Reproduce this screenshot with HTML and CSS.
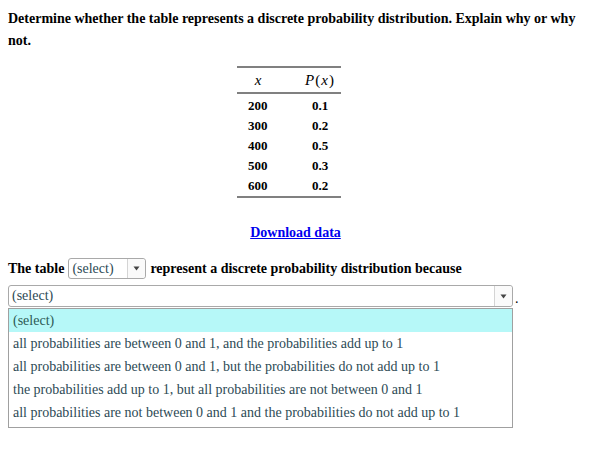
FILE: index.html
```html
<!DOCTYPE html>
<html>
<head>
<meta charset="utf-8">
<link rel="stylesheet" href="styles.css">
</head>
<body>
<p class="question">Determine whether the table represents a discrete probability distribution. Explain why or why not.</p>
<div class="table-wrap">
  <table class="dist">
    <thead>
      <tr><th class="c1"><i>x</i></th><th class="c2"><i>P</i>(<i>x</i>)</th></tr>
    </thead>
    <tbody>
      <tr><td class="c1">200</td><td class="c2">0.1</td></tr>
      <tr><td class="c1">300</td><td class="c2">0.2</td></tr>
      <tr><td class="c1">400</td><td class="c2">0.5</td></tr>
      <tr><td class="c1">500</td><td class="c2">0.3</td></tr>
      <tr><td class="c1">600</td><td class="c2">0.2</td></tr>
    </tbody>
  </table>
</div>
<div class="download"><a href="#">Download data</a></div>
<div class="sentence">
  <span>The table</span>
  <span class="sel sel-small"><span class="sel-text">(select)</span><span class="sel-arrow"><svg width="7" height="5" viewBox="0 0 7 5"><path d="M0.5 0.5 L6.5 0.5 L3.5 4.5 Z" fill="#444"/></svg></span></span>
  <span>represent a discrete probability distribution because</span>
</div>
<div class="row2">
  <div class="sel-wrap">
    <div class="sel-line">
      <span class="sel sel-wide"><span class="sel-text">(select)</span><span class="sel-arrow"><svg width="7" height="5" viewBox="0 0 7 5"><path d="M0.5 0.5 L6.5 0.5 L3.5 4.5 Z" fill="#444"/></svg></span></span>
      <span class="period">.</span>
    </div>
    <ul class="options">
      <li class="active">(select)</li>
      <li>all probabilities are between 0 and 1, and the probabilities add up to 1</li>
      <li>all probabilities are between 0 and 1, but the probabilities do not add up to 1</li>
      <li>the probabilities add up to 1, but all probabilities are not between 0 and 1</li>
      <li>all probabilities are not between 0 and 1 and the probabilities do not add up to 1</li>
    </ul>
  </div>
</div>
</body>
</html>
```
FILE: styles.css
```css
body {
  margin: 0;
  padding: 8px;
  font-family: "Liberation Serif", "Times New Roman", serif;
  font-size: 14px;
  color: #000;
  background: #fff;
}
.question {
  margin: 0;
  font-weight: bold;
  line-height: 22px;
}
.table-wrap {
  display: flex;
  justify-content: center;
  padding-right: 13px;
  margin-top: 14px;
}
.dist {
  border-collapse: collapse;
  width: 104px;
  font-family: "Liberation Serif", "Times New Roman", serif;
  font-size: 13px;
}
.dist th,
.dist td {
  font-family: "Liberation Serif", "Times New Roman", serif;
}
.dist thead tr {
  border-top: 2px solid #808080;
  border-bottom: 2px solid #808080;
}
.dist tbody tr:last-child {
  border-bottom: 2px solid #808080;
}
.dist tbody tr:first-child td {
  padding-top: 2px;
}
.dist th {
  font-weight: normal;
  font-size: 15px;
  height: 24px;
  padding: 0;
}
.dist th.c2 {
  letter-spacing: 1px;
}
.dist td {
  font-weight: bold;
  height: 20px;
  padding: 0;
}
.dist th.c1 { text-align: center; width: 42px; }
.dist td.c1 { text-align: left; padding-left: 11px; }
.dist .c2 { text-align: center; padding-left: 20px; }
.download {
  text-align: center;
  margin-top: 27px;
  line-height: 16px;
  font-weight: bold;
}
.download a {
  color: #0000ee;
  text-decoration: underline;
}
.sentence {
  display: flex;
  align-items: center;
  gap: 4px;
  margin-top: 17px;
  font-weight: bold;
}
.sel {
  display: inline-flex;
  align-items: stretch;
  box-sizing: border-box;
  border: 1px solid #a9a9a9;
  border-radius: 3px;
  background: #fff;
  font-weight: normal;
  color: #2d4a55;
}
.sel-small {
  width: 78px;
  height: 21px;
}
.sel-wide {
  width: 505px;
  height: 22px;
}
.sel-text {
  flex: 1;
  display: flex;
  align-items: center;
  padding-left: 3px;
}
.sel-arrow {
  width: 17px;
  border-left: 1px solid #d4d4d4;
  display: flex;
  align-items: center;
  justify-content: center;
  background: #fafafa;
  border-radius: 0 3px 3px 0;
}
.row2 {
  margin-top: 6px;
}
.sel-wrap {
  display: flex;
  flex-direction: column;
}
.sel-line {
  display: flex;
  align-items: flex-end;
}
.period {
  margin-left: 2px;
  line-height: 16px;
}
.options {
  width: 505px;
  box-sizing: border-box;
  margin: 1px 0 0 0;
  padding: 0 0 3px 0;
  list-style: none;
  border: 1px solid #a0a0a0;
  background: #fff;
  color: #2d4a55;
}
.options li {
  height: 23px;
  line-height: 23px;
  padding-left: 4px;
  white-space: nowrap;
}
.options li.active {
  background: #b6f8f8;
  color: #2d5a55;
}
```
